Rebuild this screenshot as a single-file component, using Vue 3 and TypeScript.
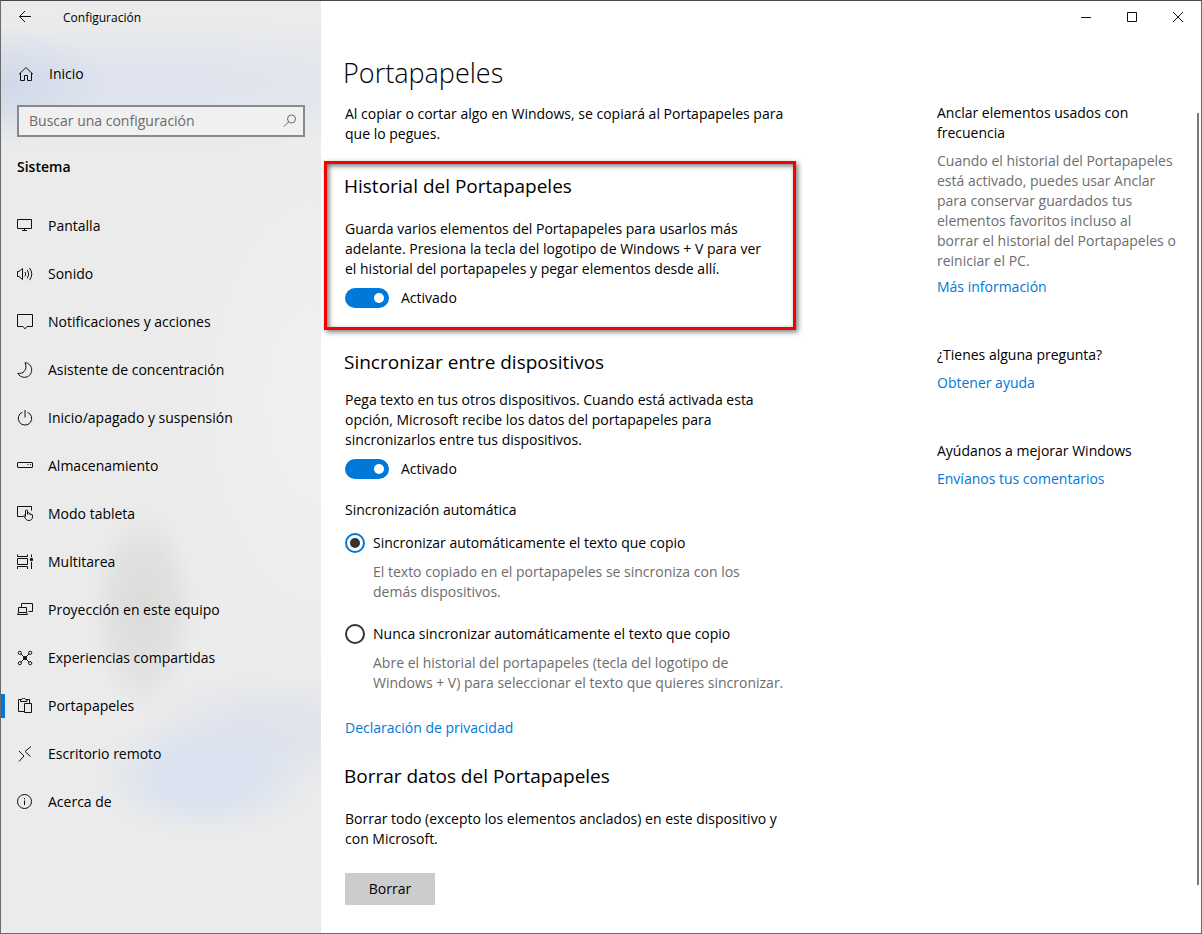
<script setup lang="ts">
import { ref } from 'vue'

interface NavItem {
  id: string
  label: string
}

const navItems: NavItem[] = [
  { id: 'display', label: 'Pantalla' },
  { id: 'sound', label: 'Sonido' },
  { id: 'notifications', label: 'Notificaciones y acciones' },
  { id: 'focus', label: 'Asistente de concentración' },
  { id: 'power', label: 'Inicio/apagado y suspensión' },
  { id: 'storage', label: 'Almacenamiento' },
  { id: 'tablet', label: 'Modo tableta' },
  { id: 'multitask', label: 'Multitarea' },
  { id: 'project', label: 'Proyección en este equipo' },
  { id: 'shared', label: 'Experiencias compartidas' },
  { id: 'clipboard', label: 'Portapapeles' },
  { id: 'remote', label: 'Escritorio remoto' },
  { id: 'about', label: 'Acerca de' },
]

const active = ref('clipboard')
const query = ref('')
const historyOn = ref(true)
const syncOn = ref(true)
const syncMode = ref<'auto' | 'never'>('auto')
</script>

<template>
  <div class="window">
    <div class="sidebar">
      <header class="titlebar">
        <button class="back" type="button" aria-label="Atrás">
          <svg width="14" height="14" viewBox="0 0 14 14"><path d="M1.500 6.500H13M7 1 1.500 6.500 7 12" /></svg>
        </button>
        <span class="app-name">Configuración</span>
      </header>

      <a class="home" href="#inicio">
        <svg width="16" height="16" viewBox="0 0 16 16"><path d="M1 8.300 8 1.500l7 6.800M2.500 7v7.500h4v-5h3v5h4V7" /></svg>
        <span>Inicio</span>
      </a>

      <div class="search">
        <input v-model="query" type="text" aria-label="Buscar una configuración" placeholder="Buscar una configuración" />
        <svg width="14" height="14" viewBox="0 0 14 14"><circle cx="8.500" cy="5" r="4" /><path d="M5.600 7.900.8 12.700" /></svg>
      </div>

      <h2 class="category">Sistema</h2>

      <nav class="nav">
        <a
          v-for="item in navItems"
          :key="item.id"
          :href="'#' + item.id"
          class="nav-item"
          :class="{ active: active === item.id }"
          @click.prevent="active = item.id"
        >
          <svg width="16" height="16" viewBox="0 0 16 16">
            <g v-if="item.id === 'display'"><path d="M.5 1.500h14v9H.5zM7.500 10.500v2M5 12.500h5" /></g>
            <g v-else-if="item.id === 'sound'">
              <path d="M.5 5.500H2l3.500-3v11l-3.500-3H.5zM8 6q1.500 2.200 0 4.400M10.300 4q3 4.200 0 8.400M12.500 2q4.600 6 0 12.200" />
            </g>
            <g v-else-if="item.id === 'notifications'"><path d="M.5.500h15v12H10l-2 2.400-2-2.400H.5z" /></g>
            <g v-else-if="item.id === 'focus'"><path d="M8 .7c4 .4 6.700 3.300 6.700 7.300s-3 7.300-7.200 7.300c-3 0-5.500-1.600-6.700-4 2.500.5 5-.2 6.500-2 2-2.300 2.200-5.600.7-8.600z" /></g>
            <g v-else-if="item.id === 'power'"><path d="M8 0v7.500M5.500 2.200a6.700 6.700 0 1 0 5 0" /></g>
            <g v-else-if="item.id === 'storage'">
              <rect x=".5" y="4.500" width="15" height="5" rx=".5" /><path d="M10.500 6.500h1M13 6.500h1" />
            </g>
            <g v-else-if="item.id === 'tablet'">
              <path d="M6.500 10.500h-6v-10h14v4M8.500 10.500V4.800c0-1.300 2-1.300 2 0v3.500-1c0-1 1.700-1 1.700 0v1c0-1 1.600-1 1.600 0v.8c0-.9 1.700-.9 1.700 0v2c0 2-1.500 3.400-3.700 3.400-2.300 0-3-1.200-4.800-4.400-.4-.9.8-1.500 1.500-.6z" />
            </g>
            <g v-else-if="item.id === 'multitask'">
              <path d="M.5.5v2h10v-2M.5 4.500h10v6H.5zM.5 15v-2.500h10V15M14.500.5v2.500M14.500 8v7" /><circle class="solid" cx="14.500" cy="5.500" r="1.300" />
            </g>
            <g v-else-if="item.id === 'project'"><path d="M4.500 5.500v-4h11v8h-4M1.500 5.500h8v5h-8zM.5 12.500h10M.5 12.500l1-2M10.500 12.500l-1-2" /></g>
            <g v-else-if="item.id === 'shared'">
              <path d="m4 4 8 8m0-8-8 8" /><circle cx="2.800" cy="2.800" r="1.600" /><circle cx="13.200" cy="2.800" r="1.600" /><circle cx="2.800" cy="13.200" r="1.600" /><circle cx="13.200" cy="13.200" r="1.600" /><circle class="solid" cx="8" cy="8" r="1.500" />
            </g>
            <g v-else-if="item.id === 'clipboard'"><path d="M7 13.500H1.500v-12h3M9.500 1.500h3v4M3.500 3.500v-2H5C5-.3 8.500-.3 8.500 1.500H10v2zM7.500 5.500h7v9h-7z" /></g>
            <g v-else-if="item.id === 'remote'"><path d="m2 5 5 5-5 5.500M14 .5l-6 5 5.500 5" /></g>
            <g v-else><circle cx="7.500" cy="7.500" r="7" /><path d="M7.500 6.500V11M7.500 4v1.300" /></g>
          </svg>
          <span>{{ item.label }}</span>
        </a>
      </nav>
    </div>

    <div class="page">
      <header class="titlebar controls">
        <button type="button" aria-label="Minimizar">
          <svg width="10" height="10" viewBox="0 0 10 10"><path d="M0 5.500h10" /></svg>
        </button>
        <button type="button" aria-label="Maximizar">
          <svg width="10" height="10" viewBox="0 0 10 10"><path d="M.5.5h9v9h-9z" /></svg>
        </button>
        <button type="button" aria-label="Cerrar">
          <svg width="10" height="10" viewBox="0 0 10 10"><path d="m0 0 10 10M10 0 0 10" /></svg>
        </button>
      </header>

      <div class="content">
        <main>
          <h1>Portapapeles</h1>
          <p class="intro">Al copiar o cortar algo en Windows, se copiará al Portapapeles para que lo pegues.</p>

          <section class="highlight">
            <h2>Historial del Portapapeles</h2>
            <p>Guarda varios elementos del Portapapeles para usarlos más adelante. Presiona la tecla del logotipo de Windows + V para ver el historial del portapapeles y pegar elementos desde allí.</p>
            <label class="toggle">
              <input v-model="historyOn" type="checkbox" role="switch" />
              <span>{{ historyOn ? 'Activado' : 'Desactivado' }}</span>
            </label>
          </section>

          <section class="sync">
            <h2>Sincronizar entre dispositivos</h2>
            <p>Pega texto en tus otros dispositivos. Cuando está activada esta opción, Microsoft recibe los datos del portapapeles para sincronizarlos entre tus dispositivos.</p>
            <label class="toggle">
              <input v-model="syncOn" type="checkbox" role="switch" />
              <span>{{ syncOn ? 'Activado' : 'Desactivado' }}</span>
            </label>

            <div class="modes" role="radiogroup" aria-labelledby="sync-title">
              <h3 id="sync-title">Sincronización automática</h3>
              <label class="radio">
                <input v-model="syncMode" type="radio" name="sync" value="auto" />
                <span>Sincronizar automáticamente el texto que copio</span>
              </label>
              <p class="hint">El texto copiado en el portapapeles se sincroniza con los demás dispositivos.</p>
              <label class="radio second">
                <input v-model="syncMode" type="radio" name="sync" value="never" />
                <span>Nunca sincronizar automáticamente el texto que copio</span>
              </label>
              <p class="hint">Abre el historial del portapapeles (tecla del logotipo de Windows + V) para seleccionar el texto que quieres sincronizar.</p>
            </div>
            <a class="link privacy" href="#privacidad">Declaración de privacidad</a>
          </section>

          <section class="clear">
            <h2>Borrar datos del Portapapeles</h2>
            <p>Borrar todo (excepto los elementos anclados) en este dispositivo y con Microsoft.</p>
            <button class="clear-button" type="button">Borrar</button>
          </section>
        </main>

        <aside>
          <section>
            <h3>Anclar elementos usados con frecuencia</h3>
            <p class="muted">Cuando el historial del Portapapeles está activado, puedes usar Anclar para conservar guardados tus elementos favoritos incluso al<br />borrar el historial del Portapapeles o reiniciar el PC.</p>
            <a class="link tight" href="#mas">Más información</a>
          </section>
          <section>
            <h3>¿Tienes alguna pregunta?</h3>
            <a class="link" href="#ayuda">Obtener ayuda</a>
          </section>
          <section>
            <h3>Ayúdanos a mejorar Windows</h3>
            <a class="link" href="#comentarios">Envíanos tus comentarios</a>
          </section>
        </aside>
      </div>
      <div class="scroll-thumb"></div>
    </div>
  </div>
</template>

<style>
body {
  margin: 0;
}
</style>

<style scoped>
* {
  box-sizing: border-box;
}

.window {
  display: grid;
  grid-template-columns: 320px minmax(0, 1fr);
  min-height: 100vh;
  border: 1px solid #6a6a6a;
  border-top-color: #48484c;
  background: #fff;
  color: #000;
  font: 14px/20px "Open Sans", "Noto Sans", sans-serif;
}

h1,
h2,
h3,
p {
  margin: 0;
  font-weight: 400;
}

h3 {
  font-size: 14px;
}

button,
input {
  margin: 0;
  font: inherit;
  color: inherit;
}

svg {
  flex: none;
  fill: none;
  stroke: #111;
  stroke-width: 1;
}

.solid {
  fill: #111;
}

.sidebar {
  background:
    radial-gradient(ellipse 110px 60px at 0 85px, #d0d8e8 0, #d0d8e800 100%),
    radial-gradient(ellipse 420px 65px at 130px 82px, #dfe4ee 20%, #dfe4ee00 100%),
    radial-gradient(ellipse 52px 100px at 142px 608px, #dcdbd9 0, #e1e1e1 60%, #e1e1e100 100%),
    radial-gradient(ellipse 110px 60px at 205px 775px, #dae2f0 40%, #dee4f000 100%),
    radial-gradient(ellipse 130px 55px at 270px 730px, #dfe3ec 30%, #dfe3ec00 100%),
    radial-gradient(ellipse 160px 300px at 320px 400px, #f1f1f1 0, #f1f1f100 100%),
    #ebebeb;
}

.titlebar {
  display: flex;
  align-items: center;
  height: 32px;
}

.titlebar button {
  display: flex;
  align-items: center;
  justify-content: center;
  width: 46px;
  height: 32px;
  padding: 0;
  border: 0;
  background: transparent;
}

.titlebar .back {
  width: 48px;
}

.app-name {
  margin: 2px 0 0 14px;
  font-size: 12px;
}

.controls {
  justify-content: flex-end;
}

.home {
  display: flex;
  align-items: center;
  gap: 15px;
  height: 48px;
  margin-top: 17px;
  padding-left: 17px;
  color: inherit;
  text-decoration: none;
}

.search {
  display: flex;
  align-items: center;
  height: 32px;
  margin: 7px 16px 0;
  padding: 0 6px 0 10px;
  border: 2px solid #87898c;
  background: #f0f0f0;
}

.search input {
  flex: 1;
  min-width: 0;
  padding: 0;
  border: 0;
  outline: 0;
  background: transparent;
}

.search input::placeholder {
  color: #6b6b6b;
  opacity: 1;
}

.search svg {
  stroke: #6b6b6b;
}

.category {
  margin: 20px 16px 0;
  font-size: 14px;
  font-weight: 600;
  line-height: 20px;
}

.nav {
  margin-top: 25px;
}

.nav-item {
  display: flex;
  align-items: center;
  gap: 15px;
  height: 48px;
  padding-left: 16px;
  color: inherit;
  text-decoration: none;
}

.nav-item.active {
  padding-left: 0;
}

.nav-item.active::before {
  width: 4px;
  height: 24px;
  margin-right: -3px;
  background: #0078d7;
  content: "";
}

.page {
  position: relative;
}

.content {
  display: grid;
  grid-template-columns: minmax(0, 450px) 242px;
  gap: 142px;
  padding: 23px 20px 28px 24px;
}

h1 {
  margin-left: -2px;
  font-size: 27px;
  font-weight: 300;
  line-height: 34px;
}

h2 {
  margin-left: -1px;
  font-size: 19px;
  line-height: 24px;
}

.intro {
  margin-top: 14px;
}

.highlight {
  margin: 17px -1px 0 -21px;
  padding: 10px 20px 19px 18px;
  border: 3px solid #f60000;
  box-shadow: 2px 2px 5px #0008, inset 2px 2px 5px #0008;
}

section p {
  margin-top: 21px;
}

.toggle {
  display: flex;
  align-items: center;
  gap: 12px;
  margin-top: 9px;
}

.toggle input {
  display: flex;
  align-items: center;
  width: 44px;
  height: 20px;
  padding: 0 5px;
  border-radius: 10px;
  background: #999;
  appearance: none;
}

.toggle input::before {
  width: 10px;
  height: 10px;
  border-radius: 50%;
  background: #fff;
  content: "";
}

.toggle input:checked {
  justify-content: flex-end;
  background: #0078d7;
}

.sync {
  margin-top: 20px;
}

.sync > p {
  margin-top: 16px;
}

.modes {
  margin-top: 21px;
}

.radio {
  display: flex;
  align-items: center;
  gap: 8px;
  margin-top: 13px;
}

.radio.second {
  margin-top: 22px;
}

.radio input {
  display: grid;
  place-items: center;
  width: 20px;
  height: 20px;
  border: 2px solid #333;
  border-radius: 50%;
  appearance: none;
}

.radio input:checked {
  border-color: #0078d7;
}

.radio input:checked::before {
  width: 10px;
  height: 10px;
  border-radius: 50%;
  background: #333;
  content: "";
}

.modes .hint {
  margin-top: 9px;
  padding: 0 10px 0 28px;
  color: #6d6d6d;
}

.link {
  display: block;
  width: fit-content;
  margin-top: 8px;
  color: #0078d7;
  text-decoration: none;
}

.privacy {
  margin-top: 25px;
}

.clear {
  margin-top: 26px;
}

.clear-button {
  width: 90px;
  height: 32px;
  margin-top: 24px;
  border: 0;
  background: #ccc;
}

aside {
  padding-top: 47px;
}

aside section + section {
  margin-top: 48px;
}

aside .muted {
  margin-top: 8px;
  color: #6d6d6d;
}

aside .tight {
  margin-top: 6px;
}

/* Overlay scroll indicator on the window's right edge */
.scroll-thumb {
  position: absolute;
  top: 112px;
  right: 2px;
  bottom: 48px;
  width: 2px;
  background: #7a7a7a;
}
</style>
